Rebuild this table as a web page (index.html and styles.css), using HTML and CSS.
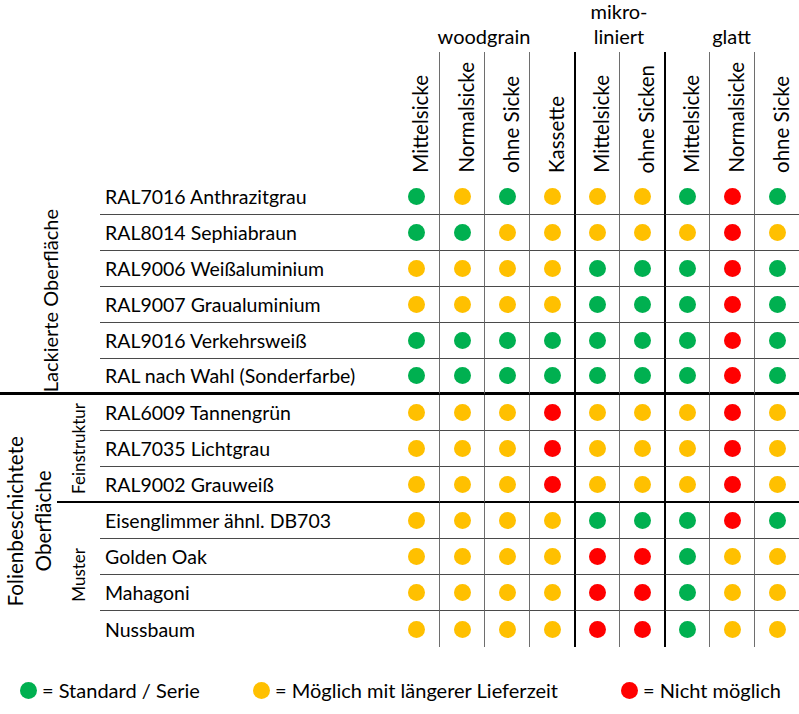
FILE: index.html
```html
<!DOCTYPE html>
<html lang="de">
<head>
<meta charset="utf-8">
<title>Farbübersicht</title>
<link rel="stylesheet" href="styles.css">
</head>
<body>
<table class="grid">
  <colgroup>
    <col class="c-sec"><col class="c-sub"><col class="c-name">
    <col class="c-d"><col class="c-d"><col class="c-d"><col class="c-d"><col class="c-d"><col class="c-d"><col class="c-d"><col class="c-d"><col class="c-d">
  </colgroup>
  <tr class="grp">
    <td colspan="3"></td>
    <th colspan="4">woodgrain</th>
    <th colspan="2"><span class="l1">mikro-</span>liniert</th>
    <th colspan="3">glatt</th>
  </tr>
  <tr class="hdr">
    <td colspan="3"></td>
    <th><span class="rot">Mittelsicke</span></th>
    <th><span class="rot">Normalsicke</span></th>
    <th><span class="rot">ohne Sicke</span></th>
    <th><span class="rot">Kassette</span></th>
    <th><span class="rot">Mittelsicke</span></th>
    <th><span class="rot">ohne Sicken</span></th>
    <th><span class="rot">Mittelsicke</span></th>
    <th><span class="rot">Normalsicke</span></th>
    <th><span class="rot">ohne Sicke</span></th>
  </tr>

  <tr class="r">
    <td class="sec sec-lack" colspan="2" rowspan="6"><span class="rot">Lackierte Oberfläche</span></td>
    <td class="n">RAL7016 Anthrazitgrau</td>
    <td class="d"><i class="dot g"></i></td><td class="d"><i class="dot y"></i></td><td class="d"><i class="dot g"></i></td><td class="d"><i class="dot y"></i></td><td class="d"><i class="dot y"></i></td><td class="d"><i class="dot y"></i></td><td class="d"><i class="dot g"></i></td><td class="d"><i class="dot rd"></i></td><td class="d"><i class="dot g"></i></td>
  </tr>
  <tr class="r">
    <td class="n">RAL8014 Sephiabraun</td>
    <td class="d"><i class="dot g"></i></td><td class="d"><i class="dot g"></i></td><td class="d"><i class="dot y"></i></td><td class="d"><i class="dot y"></i></td><td class="d"><i class="dot y"></i></td><td class="d"><i class="dot y"></i></td><td class="d"><i class="dot y"></i></td><td class="d"><i class="dot rd"></i></td><td class="d"><i class="dot y"></i></td>
  </tr>
  <tr class="r">
    <td class="n">RAL9006 Weißaluminium</td>
    <td class="d"><i class="dot y"></i></td><td class="d"><i class="dot y"></i></td><td class="d"><i class="dot y"></i></td><td class="d"><i class="dot y"></i></td><td class="d"><i class="dot g"></i></td><td class="d"><i class="dot g"></i></td><td class="d"><i class="dot g"></i></td><td class="d"><i class="dot rd"></i></td><td class="d"><i class="dot g"></i></td>
  </tr>
  <tr class="r">
    <td class="n">RAL9007 Graualuminium</td>
    <td class="d"><i class="dot y"></i></td><td class="d"><i class="dot y"></i></td><td class="d"><i class="dot y"></i></td><td class="d"><i class="dot y"></i></td><td class="d"><i class="dot g"></i></td><td class="d"><i class="dot g"></i></td><td class="d"><i class="dot g"></i></td><td class="d"><i class="dot rd"></i></td><td class="d"><i class="dot g"></i></td>
  </tr>
  <tr class="r">
    <td class="n">RAL9016 Verkehrsweiß</td>
    <td class="d"><i class="dot g"></i></td><td class="d"><i class="dot g"></i></td><td class="d"><i class="dot g"></i></td><td class="d"><i class="dot g"></i></td><td class="d"><i class="dot g"></i></td><td class="d"><i class="dot g"></i></td><td class="d"><i class="dot g"></i></td><td class="d"><i class="dot rd"></i></td><td class="d"><i class="dot g"></i></td>
  </tr>
  <tr class="r end-major">
    <td class="n">RAL nach Wahl (Sonderfarbe)</td>
    <td class="d"><i class="dot g"></i></td><td class="d"><i class="dot g"></i></td><td class="d"><i class="dot g"></i></td><td class="d"><i class="dot g"></i></td><td class="d"><i class="dot g"></i></td><td class="d"><i class="dot g"></i></td><td class="d"><i class="dot g"></i></td><td class="d"><i class="dot rd"></i></td><td class="d"><i class="dot g"></i></td>
  </tr>

  <tr class="r">
    <td class="sec sec-folie" rowspan="7"><span class="rot two">Folienbeschichtete<br>Oberfläche</span></td>
    <td class="sub sub-fein" rowspan="3"><span class="rot">Feinstruktur</span></td>
    <td class="n">RAL6009 Tannengrün</td>
    <td class="d"><i class="dot y"></i></td><td class="d"><i class="dot y"></i></td><td class="d"><i class="dot y"></i></td><td class="d"><i class="dot rd"></i></td><td class="d"><i class="dot y"></i></td><td class="d"><i class="dot y"></i></td><td class="d"><i class="dot y"></i></td><td class="d"><i class="dot rd"></i></td><td class="d"><i class="dot y"></i></td>
  </tr>
  <tr class="r">
    <td class="n">RAL7035 Lichtgrau</td>
    <td class="d"><i class="dot y"></i></td><td class="d"><i class="dot y"></i></td><td class="d"><i class="dot y"></i></td><td class="d"><i class="dot rd"></i></td><td class="d"><i class="dot y"></i></td><td class="d"><i class="dot y"></i></td><td class="d"><i class="dot y"></i></td><td class="d"><i class="dot rd"></i></td><td class="d"><i class="dot y"></i></td>
  </tr>
  <tr class="r end-minor">
    <td class="n">RAL9002 Grauweiß</td>
    <td class="d"><i class="dot y"></i></td><td class="d"><i class="dot y"></i></td><td class="d"><i class="dot y"></i></td><td class="d"><i class="dot rd"></i></td><td class="d"><i class="dot y"></i></td><td class="d"><i class="dot y"></i></td><td class="d"><i class="dot y"></i></td><td class="d"><i class="dot rd"></i></td><td class="d"><i class="dot y"></i></td>
  </tr>
  <tr class="r">
    <td class="sub" rowspan="4"><span class="rot">Muster</span></td>
    <td class="n">Eisenglimmer ähnl. DB703</td>
    <td class="d"><i class="dot y"></i></td><td class="d"><i class="dot y"></i></td><td class="d"><i class="dot y"></i></td><td class="d"><i class="dot y"></i></td><td class="d"><i class="dot g"></i></td><td class="d"><i class="dot g"></i></td><td class="d"><i class="dot g"></i></td><td class="d"><i class="dot rd"></i></td><td class="d"><i class="dot g"></i></td>
  </tr>
  <tr class="r">
    <td class="n">Golden Oak</td>
    <td class="d"><i class="dot y"></i></td><td class="d"><i class="dot y"></i></td><td class="d"><i class="dot y"></i></td><td class="d"><i class="dot y"></i></td><td class="d"><i class="dot rd"></i></td><td class="d"><i class="dot rd"></i></td><td class="d"><i class="dot g"></i></td><td class="d"><i class="dot y"></i></td><td class="d"><i class="dot y"></i></td>
  </tr>
  <tr class="r">
    <td class="n">Mahagoni</td>
    <td class="d"><i class="dot y"></i></td><td class="d"><i class="dot y"></i></td><td class="d"><i class="dot y"></i></td><td class="d"><i class="dot y"></i></td><td class="d"><i class="dot rd"></i></td><td class="d"><i class="dot rd"></i></td><td class="d"><i class="dot g"></i></td><td class="d"><i class="dot y"></i></td><td class="d"><i class="dot y"></i></td>
  </tr>
  <tr class="r last">
    <td class="n">Nussbaum</td>
    <td class="d"><i class="dot y"></i></td><td class="d"><i class="dot y"></i></td><td class="d"><i class="dot y"></i></td><td class="d"><i class="dot y"></i></td><td class="d"><i class="dot rd"></i></td><td class="d"><i class="dot rd"></i></td><td class="d"><i class="dot g"></i></td><td class="d"><i class="dot y"></i></td><td class="d"><i class="dot y"></i></td>
  </tr>
</table>

<div class="legend">
  <div class="item item-std"><i class="dot g"></i><span>= Standard / Serie</span></div>
  <div class="item item-lang"><i class="dot y"></i><span>= Möglich mit längerer Lieferzeit</span></div>
  <div class="item item-no"><i class="dot rd"></i><span>= Nicht möglich</span></div>
</div>
</body>
</html>
```

FILE: styles.css
```css
html, body {
  margin: 0;
  padding: 0;
  background: #fff;
}
body {
  font-family: Lato, "Open Sans", sans-serif;
  font-size: 19.5px;
  color: #000;
  width: 799px;
}

.grid {
  border-collapse: separate;
  border-spacing: 0;
  table-layout: fixed;
  width: 799px;
}
.c-sec { width: 57px; }
.c-sub { width: 43px; }
.c-name { width: 294px; }
.c-d { width: 45px; }

.grid td, .grid th {
  padding: 0;
  font-weight: normal;
}

/* group header row */
.grp { height: 52px; }
.grp th {
  vertical-align: bottom;
  text-align: center;
  line-height: 28px;
  padding-bottom: 2px;
  font-size: 20px;
}
.l1 {
  display: block;
  line-height: 22px;
}

/* rotated column headers */
.hdr { height: 127px; }
.hdr th {
  vertical-align: bottom;
  text-align: center;
  line-height: 0;
  padding: 0 0 6px 7px;
  font-size: 20.5px;
}

.rot {
  display: inline-block;
  vertical-align: top;
  writing-mode: vertical-rl;
  transform: rotate(180deg);
  white-space: nowrap;
  line-height: 24px;
}

/* column separators */
.hdr th:nth-last-child(-n+8),
.r td.d:nth-last-child(-n+8) {
  border-left: 1px solid #6e6e6e;
}
.hdr th:nth-last-child(5),
.hdr th:nth-last-child(3),
.r td.d:nth-last-child(5),
.r td.d:nth-last-child(3) {
  border-left: 2px solid #000;
}

/* data rows */
.r { height: 36px; }
.r td.n {
  padding-left: 5px;
  vertical-align: middle;
  white-space: nowrap;
  line-height: 20px;
  padding-top: 1px;
}
.r td.n, .r td.d {
  border-bottom: 1px solid #4a4a4a;
}
.r td.d {
  vertical-align: middle;
}
.end-major td.n, .end-major td.d, .sec-lack {
  border-bottom: 3px solid #000 !important;
}
.end-minor td.n, .end-minor td.d, .sub-fein {
  border-bottom: 2px solid #000 !important;
}
.last td.n, .last td.d {
  border-bottom: none;
}

.dot {
  display: block;
  width: 17px;
  height: 17px;
  border-radius: 50%;
  margin: 0 auto;
}
.g { background: #00b050; }
.y { background: #ffc000; }
.rd { background: #ff0000; }

/* section labels */
.sec, .sub {
  text-align: center;
  line-height: 0;
}
.sec-lack {
  vertical-align: bottom;
  padding-bottom: 6px;
  font-size: 20px;
}
.sec-folie {
  vertical-align: middle;
  font-size: 20.7px;
}
.two {
  line-height: 28px;
}
.sub {
  vertical-align: middle;
  font-size: 17px;
}
.sub .rot {
  line-height: 20px;
}

/* legend */
.legend {
  display: flex;
  align-items: center;
  padding-left: 20px;
  margin-top: 32px;
  height: 22px;
  font-size: 20px;
}
.item {
  display: flex;
  align-items: center;
  gap: 5px;
  white-space: nowrap;
}
.item .dot {
  margin: 0;
  flex: none;
}
.item-std { width: 233px; }
.item-lang { width: 368px; }
```
